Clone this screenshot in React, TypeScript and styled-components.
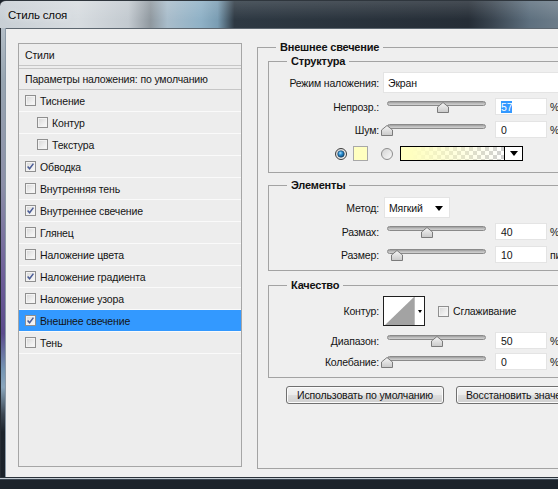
import React from 'react';
import styled, {createGlobalStyle} from 'styled-components';

const GlobalStyle = createGlobalStyle`
  html, body {
    margin: 0;
    padding: 0;
    background: #1c232b;
  }
  body {
    font-family: "Liberation Sans", Arial, sans-serif;
    font-size: 10.5px;
    letter-spacing: -0.15px;
    color: #141414;
  }
`;

const Window = styled.div`
  width: 558px;
  height: 489px;
  display: flex;
  flex-direction: column;
  overflow: hidden;
  background: #1c232b;
`;

const TitleBar = styled.div`
  flex: none;
  height: 28px;
  box-sizing: border-box;
  display: flex;
  align-items: center;
  padding-left: 8px;
  border-top: 1px solid #2f363d;
  border-top-left-radius: 6px;
  font-size: 11.5px;
  letter-spacing: -0.2px;
  color: #0a0a0a;
  text-shadow: 0 0 6px rgba(255, 255, 255, 0.9);
  background:
    linear-gradient(180deg, rgba(255, 255, 255, 0.15) 0%, rgba(255, 255, 255, 0) 70%),
    linear-gradient(90deg, #c8cfd5 0%, #d7dce0 14%, #c3cad0 23%, #8f989f 27%, #a9bdcb 30%, #8fb1c6 36%, #7a9db3 39%, #2e3943 42%, #252d36 84%, #38434e 88%, #5e707f 95%, #6c7c89 100%);
`;

const FrameBody = styled.div`
  flex: 1;
  display: flex;
  min-height: 0;
`;

const SideEdge = styled.div`
  flex: none;
  width: 6px;
  box-sizing: border-box;
  border-left: 1px solid #262c33;
  border-right: 1px solid #8b99a6;
  background: linear-gradient(180deg, #b4bec7 0%, #98a5b1 12%, #8c8fa8 35%, #6e5f99 55%, #5b4b8c 68%, #7595b3 76%, #8aa6bd 80%, #3c4753 86%, #1c232b 90%, #1b222a 100%);
`;

const Client = styled.div`
  flex: 1;
  min-width: 0;
  display: flex;
  align-items: flex-start;
  padding: 12px 0 0 12px;
  background: #efefef;
  border-top: 1px solid #5d6770;
  overflow: hidden;
`;

const BottomEdge = styled.div`
  flex: none;
  height: 12px;
  background: linear-gradient(180deg, #2a323a 0 1px, #c3cbd2 1px 2px, #3a4550 2px 3px, #1c232b 3px);
`;

/* left list of effects */

const StylesList = styled.div`
  flex: none;
  width: 224px;
  height: 424px;
  margin-top: 2px;
  box-sizing: border-box;
  border: 1px solid #a6a6a6;
  background: #ededed;
  display: flex;
  flex-direction: column;
`;

const ListHeader = styled.div`
  height: 22px;
  box-sizing: border-box;
  display: flex;
  align-items: center;
  padding-left: 6px;
  border-bottom: 1px solid #c6c6c6;
  margin-bottom: 2px;
`;

const BlendRow = styled.div`
  height: 22px;
  box-sizing: border-box;
  display: flex;
  align-items: center;
  padding-left: 6px;
  border-top: 1px solid #c6c6c6;
  border-bottom: 1px solid #c6c6c6;
`;

const StyleRow = styled.div<{$indent?: boolean; $selected?: boolean}>`
  height: 22px;
  box-sizing: border-box;
  display: flex;
  align-items: center;
  gap: 4px;
  padding-left: ${p => (p.$indent ? 18 : 6)}px;
  border-bottom: 1px solid #fafafa;
  background: ${p => (p.$selected ? '#3399ff' : 'transparent')};
`;

const CheckBox = styled.span`
  flex: none;
  width: 11px;
  height: 11px;
  box-sizing: border-box;
  border: 1px solid #8f8f8f;
  background: linear-gradient(135deg, #d6d6d6 0%, #eeeeee 60%, #fbfbfb 100%);
  box-shadow: inset 0 0 0 1px #f3f3f3;
  display: flex;
  align-items: center;
  justify-content: center;
`;

const Check = ({on}: {on: boolean}) => (
  <CheckBox>
    {on && (
      <svg width="9" height="9" viewBox="0 0 9 9">
        <path d="M1.6 4.4 L3.6 6.8 L7.4 1.6" fill="none" stroke="#4a5c96" strokeWidth="1.5" />
      </svg>
    )}
  </CheckBox>
);

/* right settings panel */

const Panel = styled.fieldset`
  flex: none;
  width: 420px;
  height: 428px;
  box-sizing: border-box;
  margin: 0 0 0 15px;
  padding: 2px 0 0 10px;
  border: 1px solid #a3a3a3;
  min-inline-size: 0;
`;

const Legend = styled.legend<{$inset: number}>`
  margin-left: ${p => p.$inset}px;
  padding: 0 4px;
  font-weight: bold;
  font-size: 11px;
  letter-spacing: -0.2px;
  line-height: 12px;
  color: #111;
`;

const Group = styled.fieldset<{$top: number; $bottom: number}>`
  width: 330px;
  box-sizing: border-box;
  margin: ${p => p.$top}px 0 0 0;
  padding: 0 0 ${p => p.$bottom}px 0;
  border: 1px solid #a3a3a3;
  min-inline-size: 0;
`;

const FieldRow = styled.div<{$top: number; $height: number}>`
  display: flex;
  align-items: center;
  margin-top: ${p => p.$top}px;
  height: ${p => p.$height}px;
  white-space: nowrap;
`;

const FieldLabel = styled.span`
  flex: none;
  width: 110px;
  text-align: right;
`;

const TextBox = styled.div<{$width: number; $gap: number}>`
  flex: none;
  width: ${p => p.$width}px;
  height: 100%;
  box-sizing: border-box;
  margin-left: ${p => p.$gap}px;
  padding-left: 4px;
  display: flex;
  align-items: center;
  background: #fff;
  border: 1px solid #e4e4e4;
  position: relative;
`;

const SelectArrow = styled.span`
  position: absolute;
  right: 6px;
  top: 50%;
  margin-top: -2px;
  border-left: 4px solid transparent;
  border-right: 4px solid transparent;
  border-top: 5px solid #000;
`;

const SliderBox = styled.div`
  flex: none;
  position: relative;
  width: 99px;
  height: 100%;
  margin-left: 8px;
`;

const Track = styled.div`
  margin-top: 3px;
  height: 5px;
  box-sizing: border-box;
  border-radius: 3px;
  border: 1px solid #8a8a8a;
  background: linear-gradient(180deg, #9c9c9c 0%, #bdbdbd 50%, #d2d2d2 100%);
`;

const Thumb = styled.svg`
  position: absolute;
  top: 4px;
  margin-left: -6px;
`;

const NumberBox = styled.div`
  flex: none;
  width: 52px;
  height: 100%;
  box-sizing: border-box;
  margin-left: 9px;
  padding-left: 5px;
  display: flex;
  align-items: center;
  background: #fff;
  border: 1px solid #e4e4e4;
`;

const Selected = styled.span`
  background: #3399ff;
  color: #fff;
`;

const Unit = styled.span`
  margin-left: 3px;
`;

const Slider = ({value}: {value: number}) => (
  <SliderBox>
    <Track />
    <Thumb width="12" height="11" viewBox="0 0 12 11" style={{left: `${value}%`}}>
      <defs>
        <linearGradient id="thumbFill" x1="0" y1="0" x2="0" y2="1">
          <stop offset="0" stopColor="#f6f6f6" />
          <stop offset="1" stopColor="#c9c9c9" />
        </linearGradient>
      </defs>
      <polygon points="0.5,5 6,0.5 11.5,5 11.5,10.5 0.5,10.5" fill="url(#thumbFill)" stroke="#7b7b7b" />
    </Thumb>
  </SliderBox>
);

const SliderRow = ({label, value, unit, top, selected}: {label: string; value: number; unit: string; top: number; selected?: boolean}) => (
  <FieldRow $top={top} $height={17}>
    <FieldLabel>{label}</FieldLabel>
    <Slider value={value} />
    <NumberBox>{selected ? <Selected>{value}</Selected> : value}</NumberBox>
    <Unit>{unit}</Unit>
  </FieldRow>
);

const ColorRow = styled(FieldRow)`
  padding-left: 66px;
`;

const Radio = ({on}: {on: boolean}) => (
  <svg width="12" height="12" viewBox="0 0 12 12">
    <defs>
      <radialGradient id="radioDot" cx="40%" cy="35%" r="65%">
        <stop offset="0" stopColor="#a9e0ff" />
        <stop offset="0.45" stopColor="#2b8fd3" />
        <stop offset="1" stopColor="#0b4a7a" />
      </radialGradient>
      <linearGradient id="radioBody" x1="0" y1="0" x2="1" y2="1">
        <stop offset="0" stopColor="#d2d2d2" />
        <stop offset="1" stopColor="#fbfbfb" />
      </linearGradient>
    </defs>
    <circle cx="6" cy="6" r="5.5" fill="url(#radioBody)" stroke={on ? '#3d3d3d' : '#8c8c8c'} />
    {on && <circle cx="6" cy="6" r="3.3" fill="url(#radioDot)" stroke="#1d3f5c" strokeWidth="0.6" />}
  </svg>
);

const Swatch = styled.div<{$gap: number}>`
  flex: none;
  width: 15px;
  height: 15px;
  box-sizing: border-box;
  margin: 0 ${p => p.$gap}px 0 6px;
  border: 1px solid #a8a8a8;
  background: #ffffc0;
`;

const GradientBox = styled.div`
  flex: none;
  width: 123px;
  height: 15px;
  box-sizing: border-box;
  margin-left: 7px;
  border: 1px solid #000;
  display: flex;
`;

const GradientFill = styled.div`
  flex: 1;
  background:
    linear-gradient(90deg, #ffffc0 0%, #ffffc0 10%, rgba(255, 255, 192, 0) 100%),
    repeating-conic-gradient(#d0d0d0 0 25%, #ffffff 0 50%) 0 0 / 8px 8px;
`;

const GradientArrow = styled.div`
  flex: none;
  width: 17px;
  border-left: 1px solid #000;
  background: #fff;
  display: flex;
  align-items: center;
  justify-content: center;
  &::after {
    content: '';
    border-left: 4px solid transparent;
    border-right: 4px solid transparent;
    border-top: 5px solid #000;
  }
`;

const ContourBox = styled.div`
  flex: none;
  width: 42px;
  height: 30px;
  box-sizing: border-box;
  margin-left: 4px;
  border: 1px solid #1f1f1f;
  background: #fff;
  display: flex;
`;

const ContourArrow = styled.div`
  flex: 1;
  display: flex;
  align-items: center;
  justify-content: center;
  border-left: 1px solid #bdbdbd;
  &::after {
    content: '';
    border-left: 2px solid transparent;
    border-right: 2px solid transparent;
    border-top: 3px solid #000;
  }
`;

const AntiAlias = styled.span`
  display: flex;
  align-items: center;
  gap: 4px;
  margin-left: 13px;
`;

const ButtonRow = styled.div`
  display: flex;
  gap: 12px;
  margin: 8px 0 0 18px;
`;

const Button = styled.button<{$width: number}>`
  flex: none;
  width: ${p => p.$width}px;
  height: 18px;
  box-sizing: border-box;
  padding: 0 9px;
  border: 1px solid #707070;
  border-radius: 3px;
  background: linear-gradient(180deg, #f2f2f2 0%, #ebebeb 48%, #dddddd 52%, #cfcfcf 100%);
  box-shadow: inset 0 0 0 1px #fbfbfb;
  font-family: inherit;
  font-size: 10.5px;
  letter-spacing: -0.15px;
  color: #111;
  white-space: nowrap;
  overflow: hidden;
  text-align: ${p => (p.$width > 180 ? 'left' : 'center')};
`;

const effects = [
  {name: 'Тиснение', on: false},
  {name: 'Контур', on: false, indent: true},
  {name: 'Текстура', on: false, indent: true},
  {name: 'Обводка', on: true},
  {name: 'Внутренняя тень', on: false},
  {name: 'Внутреннее свечение', on: true},
  {name: 'Глянец', on: false},
  {name: 'Наложение цвета', on: false},
  {name: 'Наложение градиента', on: true},
  {name: 'Наложение узора', on: false},
  {name: 'Внешнее свечение', on: true, selected: true},
  {name: 'Тень', on: false},
];

export default function App() {
  return (
    <Window>
      <GlobalStyle />
      <TitleBar>Стиль слоя</TitleBar>
      <FrameBody>
        <SideEdge />
        <Client>
          <StylesList>
            <ListHeader>Стили</ListHeader>
            <BlendRow>Параметры наложения: по умолчанию</BlendRow>
            {effects.map(effect => (
              <StyleRow key={effect.name} $indent={effect.indent} $selected={effect.selected}>
                <Check on={effect.on} />
                {effect.name}
              </StyleRow>
            ))}
          </StylesList>

          <Panel>
            <Legend $inset={8}>Внешнее свечение</Legend>

            <Group $top={0} $bottom={11}>
              <Legend $inset={18}>Структура</Legend>
              <FieldRow $top={5} $height={21}>
                <FieldLabel>Режим наложения:</FieldLabel>
                <TextBox $width={220} $gap={4}>Экран</TextBox>
              </FieldRow>
              <SliderRow label="Непрозр.:" value={57} unit="%" top={5} selected />
              <SliderRow label="Шум:" value={0} unit="%" top={6} />
              <ColorRow $top={8} $height={15}>
                <Radio on />
                <Swatch $gap={13} />
                <Radio on={false} />
                <GradientBox>
                  <GradientFill />
                  <GradientArrow />
                </GradientBox>
              </ColorRow>
            </Group>

            <Group $top={6} $bottom={7}>
              <Legend $inset={18}>Элементы</Legend>
              <FieldRow $top={6} $height={21}>
                <FieldLabel>Метод:</FieldLabel>
                <TextBox $width={66} $gap={5}>
                  Мягкий
                  <SelectArrow />
                </TextBox>
              </FieldRow>
              <SliderRow label="Размах:" value={40} unit="%" top={5} />
              <SliderRow label="Размер:" value={10} unit="пикс." top={6} />
            </Group>

            <Group $top={8} $bottom={7}>
              <Legend $inset={18}>Качество</Legend>
              <FieldRow $top={5} $height={30}>
                <FieldLabel>Контур:</FieldLabel>
                <ContourBox>
                  <svg width="30" height="28" viewBox="0 0 30 28">
                    <polygon points="1,28 30,0 30,28" fill="#a3a3a3" />
                  </svg>
                  <ContourArrow />
                </ContourBox>
                <AntiAlias>
                  <Check on={false} />
                  Сглаживание
                </AntiAlias>
              </FieldRow>
              <SliderRow label="Диапазон:" value={50} unit="%" top={6} />
              <SliderRow label="Колебание:" value={0} unit="%" top={4} />
            </Group>

            <ButtonRow>
              <Button $width={158}>Использовать по умолчанию</Button>
              <Button $width={220}>Восстановить значения по умолчанию</Button>
            </ButtonRow>
          </Panel>
        </Client>
      </FrameBody>
      <BottomEdge />
    </Window>
  );
}
